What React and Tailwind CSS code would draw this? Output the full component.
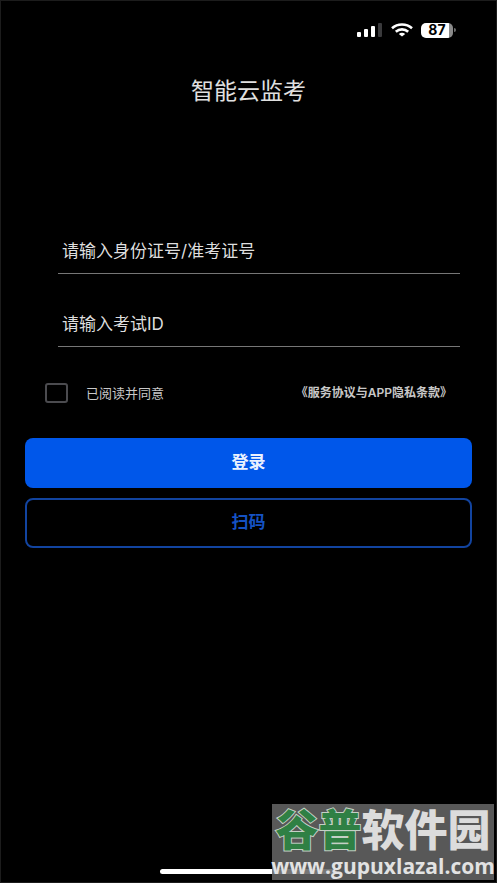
import { useState } from 'react';

function SignalIcon() {
  return (
    <svg width="26" height="14" viewBox="0 0 26 14" fill="#fff" aria-hidden="true">
      <rect x="0" y="9" width="4" height="5" rx="1" />
      <rect x="7" y="6" width="4" height="8" rx="1" />
      <rect x="14" y="3" width="4" height="11" rx="1" />
      <rect x="21" y="0" width="4" height="14" rx="1" fill="#3a3a3c" />
    </svg>
  );
}

function WifiIcon() {
  return (
    <svg width="22" height="14" viewBox="0 0 22 14" fill="none" stroke="#fff" strokeWidth="2.6" aria-hidden="true">
      <path d="M1 5.2C6.6 0.2 15.4 0.2 21 5.2" />
      <path d="M4.8 8.8C8.4 5.6 13.6 5.6 17.2 8.8" />
      <path d="M11 13.6L7.8 10.9C9.6 9.5 12.4 9.5 14.2 10.9Z" fill="#fff" stroke="none" />
    </svg>
  );
}

function Battery({ level }) {
  return (
    <div className="flex items-center gap-px">
      <div className="flex h-[15px] w-8 items-center justify-center rounded-[5px] bg-linear-to-r from-white from-87% to-[#8a8a8a] to-87% text-[14px] leading-none font-bold text-black">
        {level}
      </div>
      <div className="h-1 w-0.5 rounded-r bg-[#6b6b6b]" />
    </div>
  );
}

function Field({ label, value, onChange }) {
  return (
    <div className="border-b border-[#767676] pt-1">
      <input
        type="text"
        aria-label={label}
        value={value}
        onChange={(e) => onChange(e.target.value)}
        placeholder={label}
        className="block h-11 w-full bg-transparent px-1 text-[17px] text-[#dedede] outline-none placeholder:text-[#dedede]"
      />
    </div>
  );
}

function Watermark() {
  return (
    <div className="pointer-events-none absolute right-0.5 bottom-0.5 flex h-[76px] w-[222px] flex-col items-center justify-end bg-[#646464]/88 whitespace-nowrap">
      <div className="flex text-[43px] leading-[44px] font-black text-[#dcdcdc]">
        <span className="text-[#2f8044] [paint-order:stroke_fill] [-webkit-text-stroke:2px_#c4d0c6]">谷普</span>
        <span>软件园</span>
      </div>
      <div className="font-['Open_Sans',sans-serif] text-[21px] leading-7 font-bold text-[#e2e2e2]">
        www.gupuxlazal.com
      </div>
    </div>
  );
}

export default function App() {
  const [idNumber, setIdNumber] = useState('');
  const [examId, setExamId] = useState('');
  const [agreed, setAgreed] = useState(false);

  return (
    <div className="relative flex min-h-screen flex-col border border-[#1c1c1c] bg-black font-[Inter,'Noto_Sans_CJK_SC',sans-serif]">
      <header>
        <div className="flex h-[58px] items-center justify-end gap-2 pr-10">
          <SignalIcon />
          <WifiIcon />
          <Battery level={87} />
        </div>
        <h1 className="pt-4 text-center text-[23px] leading-8 text-[#e0e0e0]">智能云监考</h1>
      </header>

      <form onSubmit={(e) => e.preventDefault()} className="mt-[118px] px-6">
        <div className="flex flex-col gap-6 pr-3 pl-[33px]">
          <Field label="请输入身份证号/准考证号" value={idNumber} onChange={setIdNumber} />
          <Field label="请输入考试ID" value={examId} onChange={setExamId} />
        </div>

        <div className="mt-9 flex items-center justify-between pr-5 pl-5 text-[13px] leading-5 text-[#c8c8c8]">
          <label className="flex items-center gap-[18px]">
            <input
              type="checkbox"
              checked={agreed}
              onChange={(e) => setAgreed(e.target.checked)}
              className="h-5 w-[23px] appearance-none rounded-[3px] border-2 border-[#4b4b4f] checked:bg-[#0057ea]"
            />
            已阅读并同意
          </label>
          <a href="#terms" className="text-xs leading-5 font-semibold">《服务协议与APP隐私条款》</a>
        </div>

        <div className="mt-[35px] flex flex-col gap-2.5 text-[17px] font-bold">
          <button type="submit" className="h-[50px] rounded-lg bg-[#0057ea] text-[#eaf2ff]">登录</button>
          <button type="button" className="h-[50px] rounded-lg border-2 border-[#1244a0] text-[#1552c4]">扫码</button>
        </div>
      </form>

      <div className="mx-auto mt-auto mb-2 h-[5px] w-[177px] rounded-full bg-white" />
      <Watermark />
    </div>
  );
}
